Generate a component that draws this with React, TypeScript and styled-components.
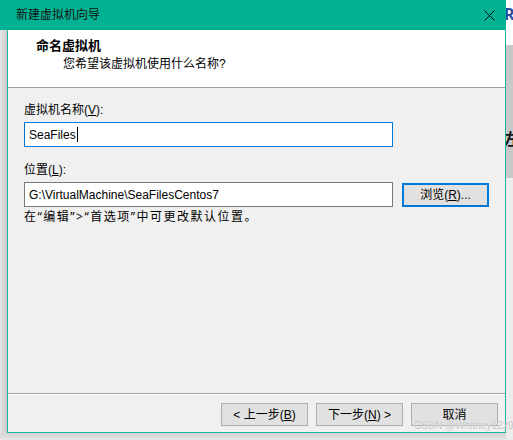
import React from "react";
import styled, { createGlobalStyle } from "styled-components";

const Global = createGlobalStyle`
  html, body { margin: 0; padding: 0; }
  body {
    width: 513px;
    height: 440px;
    overflow: hidden;
    font-family: "Liberation Sans", "Noto Sans CJK SC", sans-serif;
    font-size: 12px;
    color: #000;
  }
`;

const Page = styled.div`
  position: relative;
  width: 513px;
  height: 440px;
  display: flex;
  background: #dcdcdc;
  overflow: hidden;
`;

const WindowCol = styled.div`
  width: 506px;
  display: flex;
  flex-direction: column;
`;

const TitleBar = styled.div`
  height: 30px;
  background: #03b292;
  display: flex;
  align-items: center;
  justify-content: space-between;
  padding: 0 10px 0 16px;
  box-sizing: border-box;
`;

const TitleText = styled.span`
  font-size: 12px;
  color: #111;
  line-height: 16px;
`;

const CloseBtn = styled.div`
  width: 12px;
  height: 12px;
  display: flex;
  align-items: center;
  justify-content: center;
  margin-right: 1px;
`;

const Row = styled.div`
  display: flex;
  flex: 1;
`;

const LeftShadow = styled.div`
  width: 7px;
  background: linear-gradient(to right, #e4e4e4, #d6d6d6);
  height: 403px;
`;

const Body = styled.div`
  width: 499px;
  height: 403px;
  box-sizing: border-box;
  border-left: 1px solid #1bb697;
  border-right: 1px solid #1bb697;
  border-bottom: 1px solid #1bb697;
  background: #f0f0f0;
  display: flex;
  flex-direction: column;
  box-shadow: 0 2px 6px rgba(0,0,0,0.15);
`;

const Header = styled.div`
  height: 57px;
  background: #fff;
  border-bottom: 1px solid #a0a0a0;
  box-sizing: content-box;
  padding: 0 0 0 28px;
  display: flex;
  flex-direction: column;
`;

const HeaderTitle = styled.div`
  font-weight: bold;
  font-size: 13px;
  line-height: 16px;
  margin-top: 8px;
`;

const HeaderSub = styled.div`
  line-height: 16px;
  margin-top: 2px;
  padding-left: 27px;
`;

const Content = styled.div`
  flex: 1;
  padding: 14px 0 0 16px;
  display: flex;
  flex-direction: column;
  border-bottom: 1px solid #a0a0a0;
`;

const Label = styled.div<{ $mt?: number }>`
  line-height: 16px;
  margin-top: ${(p) => p.$mt ?? 0}px;
`;

const U = styled.span`
  text-decoration: underline;
  text-underline-offset: 1px;
`;

const FieldRow = styled.div`
  display: flex;
  align-items: center;
  gap: 9px;
  margin-top: 4px;
`;

const Input = styled.div<{ $focused?: boolean }>`
  width: 369px;
  height: 25px;
  box-sizing: border-box;
  background: #fff;
  border: 1px solid ${(p) => (p.$focused ? "#0078d7" : "#7a7a7a")};
  display: flex;
  align-items: center;
  padding-left: 4px;
  font-size: 12px;
  line-height: 16px;
`;

const Caret = styled.span`
  display: inline-block;
  width: 1px;
  height: 15px;
  background: #000;
  margin-left: 1px;
`;

const Button = styled.div<{ $default?: boolean }>`
  width: 87px;
  height: ${(p) => (p.$default ? 24 : 23)}px;
  box-sizing: border-box;
  background: #e1e1e1;
  border: ${(p) => (p.$default ? "2px solid #0078d7" : "1px solid #adadad")};
  display: flex;
  align-items: center;
  justify-content: center;
  font-size: 12px;
  line-height: 16px;
  white-space: pre;
`;

const Hint = styled.div`
  line-height: 16px;
  margin-top: 2px;
  letter-spacing: 1.5px;
  font-family: "Noto Sans", "Noto Sans CJK SC", sans-serif;
`;

const Footer = styled.div`
  height: 38px;
  border-top: 1px solid #fff;
  display: flex;
  justify-content: flex-end;
  gap: 8px;
  padding: 8px 7px 0 0;
  box-sizing: border-box;
`;

const BottomShadow = styled.div`
  height: 7px;
  background: linear-gradient(to bottom, #d4d4d4, #e6e6e6);
`;

const RightStrip = styled.div`
  width: 7px;
  display: flex;
  flex-direction: column;
  overflow: hidden;
`;

const StripPart = styled.div<{ $h: number; $bg: string }>`
  height: ${(p) => p.$h}px;
  background: ${(p) => p.$bg};
  position: relative;
  overflow: hidden;
  font-size: 16px;
  line-height: 20px;
`;

const StripGlyph = styled.span<{ $top: number; $color: string }>`
  position: absolute;
  left: -2px;
  top: ${(p) => p.$top}px;
  color: ${(p) => p.$color};
  font-family: "Noto Sans", "Noto Sans CJK SC", sans-serif;
  font-weight: bold;
`;

const Watermark = styled.div`
  position: absolute;
  left: 414px;
  top: 420px;
  font-family: "Liberation Sans", Arial, sans-serif;
  font-size: 10px;
  line-height: 12px;
  white-space: nowrap;
  color: #c4c4c4;
  text-shadow: 0 0 1px #fff;
`;

export default function App() {
  return (
    <>
      <Global />
      <Page>
        <WindowCol>
          <TitleBar>
            <TitleText>新建虚拟机向导</TitleText>
            <CloseBtn>
              <svg width="11" height="11" viewBox="0 0 11 11">
                <path d="M0.5 0.5 L10.5 10.5 M10.5 0.5 L0.5 10.5" stroke="#111" strokeWidth="1" />
              </svg>
            </CloseBtn>
          </TitleBar>
          <Row>
            <LeftShadow />
            <Body>
              <Header>
                <HeaderTitle>命名虚拟机</HeaderTitle>
                <HeaderSub>您希望该虚拟机使用什么名称?</HeaderSub>
              </Header>
              <Content>
                <Label>
                  虚拟机名称(<U>V</U>):
                </Label>
                <FieldRow>
                  <Input $focused>
                    SeaFiles
                    <Caret />
                  </Input>
                </FieldRow>
                <Label $mt={15}>
                  位置(<U>L</U>):
                </Label>
                <FieldRow>
                  <Input>G:\VirtualMachine\SeaFilesCentos7</Input>
                  <Button $default>
                    浏览(<U>R</U>)...
                  </Button>
                </FieldRow>
                <Hint>{"在“编辑”>“首选项”中可更改默认位置。"}</Hint>
              </Content>
              <Footer>
                <Button>
                  {"< 上一步("}
                  <U>B</U>)
                </Button>
                <Button>
                  下一步(<U>N</U>){" >"}
                </Button>
                <Button>取消</Button>
              </Footer>
            </Body>
          </Row>
          <BottomShadow />
        </WindowCol>
        <RightStrip>
          <StripPart $h={45} $bg="#ffffff">
            <StripGlyph $top={4} $color="#2b4c9c">R</StripGlyph>
          </StripPart>
          <StripPart $h={133} $bg="#c8c8c8">
            <StripGlyph $top={84} $color="#111">左</StripGlyph>
          </StripPart>
          <StripPart $h={262} $bg="#ececec" />
        </RightStrip>
        <Watermark>CSDN @Whitney1229</Watermark>
      </Page>
    </>
  );
}
